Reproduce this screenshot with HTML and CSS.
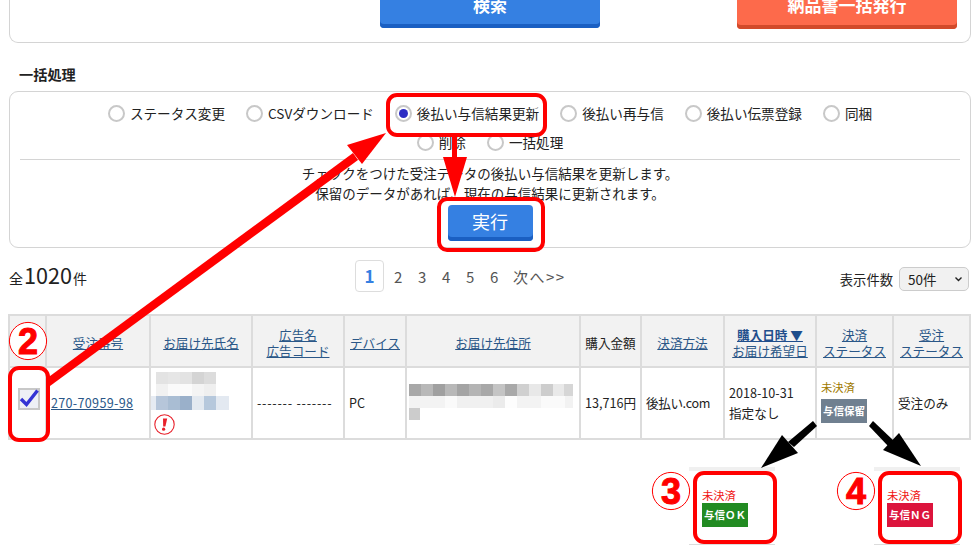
FILE: index.html
```html
<!DOCTYPE html>
<html lang="ja">
<head>
<meta charset="utf-8">
<title>一括処理</title>
<link rel="stylesheet" href="styles.css">
</head>
<body>
<div class="page">
  <section class="search-card">
    <a class="btn btn-blue btn-search">検索</a>
    <a class="btn btn-orange btn-issue">納品書一括発行</a>
  </section>

  <h2 class="section-title">一括処理</h2>
  <section class="bulk-card">
    <div class="radio-group">
      <label class="radio-item"><span class="radio"></span>ステータス変更</label>
      <label class="radio-item"><span class="radio"></span>CSVダウンロード</label>
      <label class="radio-item"><span class="radio radio-on"></span>後払い与信結果更新</label>
      <label class="radio-item"><span class="radio"></span>後払い再与信</label>
      <label class="radio-item"><span class="radio"></span>後払い伝票登録</label>
      <label class="radio-item"><span class="radio"></span>同梱</label>
      <span class="radio-break"></span>
      <label class="radio-item"><span class="radio"></span>削除</label>
      <label class="radio-item"><span class="radio"></span>一括処理</label>
    </div>
    <div class="bulk-desc">
      <p>チェックをつけた受注データの後払い与信結果を更新します。</p>
      <p>保留のデータがあれば、現在の与信結果に更新されます。</p>
    </div>
    <a class="btn btn-blue btn-run">実行</a>
  </section>

  <div class="list-bar">
    <div class="total">全<b>1020</b>件</div>
    <nav class="pager">
      <span class="page-current">1</span>
      <span class="page-num">2</span>
      <span class="page-num">3</span>
      <span class="page-num">4</span>
      <span class="page-num">5</span>
      <span class="page-num">6</span>
      <span class="page-next">次へ&gt;&gt;</span>
    </nav>
    <div class="per-page">表示件数
      <span class="select">50件
        <svg class="chevron" width="9" height="6" viewBox="0 0 9 6"><path d="M1.5 1.5 4.5 4.5 7.5 1.5" fill="none" stroke="#222" stroke-width="1.4"/></svg>
      </span>
    </div>
  </div>

  <table class="orders">
    <colgroup>
      <col class="c1"><col class="c2"><col class="c3"><col class="c4"><col class="c5"><col class="c6"><col class="c7"><col class="c8"><col class="c9"><col class="c10"><col class="c11">
    </colgroup>
    <thead>
      <tr>
        <th></th>
        <th><a>受注番号</a></th>
        <th><a>お届け先氏名</a></th>
        <th><a>広告名<br>広告コード</a></th>
        <th><a>デバイス</a></th>
        <th><a>お届け先住所</a></th>
        <th class="plain">購入金額</th>
        <th><a>決済方法</a></th>
        <th><a class="sorted">購入日時 ▼</a><br><a>お届け希望日</a></th>
        <th><a>決済<br>ステータス</a></th>
        <th><a>受注<br>ステータス</a></th>
      </tr>
    </thead>
    <tbody>
      <tr>
        <td class="cell-check"><span class="checkbox"><svg class="check-mark" width="18" height="18" viewBox="0 0 18 18"><path d="M1 9 6.5 14.5 17.5 0.5" fill="none" stroke="#3434d4" stroke-width="3.4"/></svg></span></td>
        <td class="cell-id"><a>270-70959-98</a></td>
        <td class="cell-name">
          <svg class="mosaic" width="78" height="38" viewBox="0 0 78 38">
            <g>
              <rect x="5" y="0" width="12" height="12" fill="#e3e3e3"/><rect x="17" y="0" width="12" height="12" fill="#e6e6e6"/><rect x="29" y="0" width="12" height="12" fill="#e3e3e3"/><rect x="41" y="0" width="12" height="12" fill="#d4d4d4"/><rect x="53" y="0" width="12" height="12" fill="#dcdcdc"/>
              <rect x="5" y="12" width="12" height="12" fill="#f1f1f1"/><rect x="17" y="12" width="12" height="12" fill="#fafafa"/><rect x="29" y="12" width="12" height="12" fill="#fbfbfb"/><rect x="41" y="12" width="12" height="12" fill="#f4f4f4"/><rect x="53" y="12" width="12" height="12" fill="#efefef"/>
              <rect x="0" y="24" width="5" height="14" fill="#e6ebf2"/><rect x="5" y="24" width="12" height="14" fill="#b6c6da"/><rect x="17" y="24" width="12" height="14" fill="#a9bdd3"/><rect x="29" y="24" width="12" height="14" fill="#9ab0ca"/><rect x="41" y="24" width="12" height="14" fill="#e3e9f0"/><rect x="53" y="24" width="12" height="14" fill="#b6c8dc"/><rect x="65" y="24" width="13" height="14" fill="#e3e9f1"/>
            </g>
          </svg>
          <svg class="alert" width="21" height="21" viewBox="0 0 21 21"><circle cx="10.5" cy="10.5" r="9.7" fill="#fff" stroke="#e8202a" stroke-width="1.1"/><path d="M9 4.5h4.2L11.4 12.5H9.2Z" fill="#e8202a"/><circle cx="9.6" cy="15.2" r="1.6" fill="#e8202a"/></svg>
        </td>
        <td class="cell-dashes">------- -------</td>
        <td>PC</td>
        <td class="cell-address">
          <svg class="mosaic" width="166" height="36" viewBox="0 0 166 36">
            <rect x="0" y="0" width="12" height="12" fill="#a8a8a8"/><rect x="12" y="0" width="12" height="12" fill="#b8b8b8"/><rect x="24" y="0" width="12" height="12" fill="#a0a0a0"/><rect x="36" y="0" width="12" height="12" fill="#b8b8b8"/><rect x="48" y="0" width="12" height="12" fill="#a4a4a4"/><rect x="60" y="0" width="12" height="12" fill="#b4b4b4"/><rect x="72" y="0" width="12" height="12" fill="#a8a8a8"/><rect x="84" y="0" width="12" height="12" fill="#c4c4c4"/><rect x="96" y="0" width="12" height="12" fill="#a9a9a9"/><rect x="108" y="0" width="12" height="12" fill="#d0d0d0"/><rect x="120" y="0" width="12" height="12" fill="#e8e8e8"/><rect x="132" y="0" width="12" height="12" fill="#cdcdcd"/><rect x="144" y="0" width="11" height="12" fill="#e9e9e9"/><rect x="155" y="0" width="9" height="12" fill="#d6d6d6"/>
            <rect x="0" y="12" width="36" height="12" fill="#f3f3f3"/><rect x="36" y="12" width="12" height="12" fill="#fafafa"/><rect x="48" y="12" width="36" height="12" fill="#f0f0f0"/><rect x="84" y="12" width="12" height="12" fill="#ebebeb"/><rect x="96" y="12" width="12" height="12" fill="#fdfdfd"/><rect x="108" y="12" width="24" height="12" fill="#f3f3f3"/><rect x="132" y="12" width="24" height="12" fill="#fafafa"/><rect x="156" y="12" width="8" height="12" fill="#f2f2f2"/>
            <rect x="0" y="24" width="11" height="12" fill="#cccccc"/>
          </svg>
        </td>
        <td>13,716円</td>
        <td class="cell-method">後払い.com</td>
        <td class="cell-date">2018-10-31<br>指定なし</td>
        <td class="cell-status">
          <div class="status-label">未決済</div>
          <div class="badge badge-hold">与信保留</div>
        </td>
        <td>受注のみ</td>
      </tr>
    </tbody>
  </table>
</div>

<div class="callout callout-ok">
  <div class="status-label status-red">未決済</div>
  <div class="badge badge-ok">与信ＯＫ</div>
</div>
<div class="callout callout-ng">
  <div class="status-label status-red">未決済</div>
  <div class="badge badge-ng">与信ＮＧ</div>
</div>

<svg class="annotations" width="980" height="560" viewBox="0 0 980 560">
  <g fill="none" stroke="#f00" stroke-width="4">
    <rect x="388" y="95" width="157" height="40" rx="9"/>
    <rect x="439" y="199" width="104" height="51" rx="8"/>
    <rect x="10" y="368" width="38" height="72" rx="9"/>
    <rect x="695" y="473" width="80" height="69" rx="9"/>
    <rect x="880" y="473" width="80" height="69" rx="9"/>
  </g>
  <g fill="#f00">
    <path d="M46 379 353 153 358 160 50 386Z"/>
    <path d="M386 133 347 145 362 164Z"/>
    <path d="M452 137h5v20h10l-12 40-12-40h9Z"/>
  </g>
  <g fill="#000">
    <path d="M813 421 817 426 794 447 788 442Z"/>
    <path d="M761 468 782 435 798 453Z"/>
    <path d="M873 421 869 426 888 446 894 441Z"/>
    <path d="M921 466 899 433 883 450Z"/>
  </g>
  <g class="num-circles">
    <circle cx="28" cy="341" r="18.6"/>
    <circle cx="671" cy="491" r="18.6"/>
    <circle cx="856" cy="491" r="18.6"/>
  </g>
  <g class="num-text">
    <text x="28" y="354">2</text>
    <text x="671" y="504">3</text>
    <text x="856" y="504">4</text>
  </g>
</svg>
</body>
</html>
```
FILE: styles.css
```css
* { box-sizing: border-box; }
html, body { margin: 0; padding: 0; }
body {
  width: 980px;
  height: 560px;
  overflow: hidden;
  position: relative;
  background: #fff;
  color: #222;
  font-family: "Noto Sans CJK JP", "Liberation Sans", sans-serif;
  font-size: 12.6px;
}
p { margin: 0; }
.page { padding: 0 9px; }

/* buttons */
.btn { display: block; color: #fff; text-align: center; }
.btn-blue { background: #3580e2; box-shadow: inset 0 -4px 0 #1a5fc2; }
.btn-orange { background: #fd6a4b; box-shadow: inset 0 -4px 0 #d24a2a; }

/* top search card */
.search-card {
  height: 43px;
  display: flex;
  align-items: flex-start;
  border: 1px solid #d4d4d4;
  border-top: 0;
  border-radius: 0 0 9px 9px;
}
.btn-search, .btn-issue {
  width: 220px;
  font-size: 17px;
  font-weight: 700;
  line-height: 10px;
  border-radius: 0 0 4px 4px;
}
.btn-search { height: 28px; margin-left: 370px; }
.btn-issue { height: 29px; margin-left: 137px; }

.section-title {
  margin: 21px 0 7px 10px;
  font-size: 14.2px;
  font-weight: 700;
  line-height: 20px;
  color: #222;
}

/* bulk card */
.bulk-card {
  height: 157px;
  padding: 9px 10px 0;
  border: 1px solid #d4d4d4;
  border-radius: 9px;
  font-size: 13.5px;
}
.radio-group {
  display: flex;
  flex-wrap: wrap;
  justify-content: center;
  align-content: flex-start;
  column-gap: 21px;
  height: 59px;
  border-bottom: 1px solid #d4d4d4;
  padding-top: 2px;
  font-size: 13.6px;
}
.radio-item {
  display: flex;
  align-items: center;
  gap: 5px;
  height: 20px;
  line-height: 20px;
  white-space: nowrap;
}
.radio-break { flex-basis: 100%; height: 9px; }
.radio {
  width: 17px;
  height: 17px;
  border: 2px solid #c8c8c8;
  border-radius: 50%;
  background: #fff;
  display: flex;
  align-items: center;
  justify-content: center;
}
.radio-on::after {
  content: "";
  width: 9px;
  height: 9px;
  border-radius: 50%;
  background: #2c2cc4;
}
.bulk-desc {
  text-align: center;
  line-height: 20px;
  padding-top: 3px;
}
.btn-run {
  width: 85px;
  height: 36px;
  margin: 2px auto 0;
  font-size: 18px;
  line-height: 32px;
  border-radius: 4px;
}

/* list bar */
.list-bar {
  display: grid;
  grid-template-columns: 346px auto 1fr;
  height: 33px;
  margin: 9px 0 24px;
  align-items: center;
}
.total { font-size: 14px; line-height: 33px; padding-top: 1px; }
.total b { font-size: 21.6px; font-weight: 400; margin: 0 1px; }
.pager {
  display: flex;
  align-items: center;
  font-size: 15px;
  color: #555;
}
.page-current {
  width: 29px;
  height: 32px;
  line-height: 30px;
  text-align: center;
  border: 1px solid #ddd;
  border-radius: 4px;
  color: #3580e2;
  font-size: 17px;
  font-weight: 700;
  margin-right: 10px;
}
.page-num { width: 24px; }
.page-next { margin-left: -1px; font-size: 15px; letter-spacing: 1.5px; }
.per-page {
  justify-self: end;
  display: flex;
  align-items: center;
  gap: 6px;
  font-size: 13.3px;
  margin-top: 6px;
  margin-right: 2px;
}
.select {
  display: flex;
  align-items: center;
  justify-content: space-between;
  width: 70px;
  height: 24px;
  padding: 0 5px 0 8px;
  background: #f1f1f1;
  border: 1px solid #ccc;
  border-radius: 5px;
  font-size: 13.5px;
}

/* table */
.orders {
  border-collapse: collapse;
  table-layout: fixed;
  width: 962px;
  margin-left: -1px;
  font-size: 12.6px;
  line-height: 16px;
}
.c1 { width: 37px; } .c2 { width: 104px; } .c3 { width: 102px; }
.c4 { width: 92px; } .c5 { width: 62px; } .c6 { width: 174px; }
.c7 { width: 61px; } .c8 { width: 83px; } .c9 { width: 92px; }
.c10 { width: 77px; } .c11 { width: 77px; }
.orders th, .orders td {
  border: 2px solid #dcdcdc;
  padding: 0 3px;
  white-space: nowrap;
}
.orders th {
  height: 52px;
  padding-top: 4px;
  background: #f2f2f2;
  font-weight: 400;
  text-align: center;
}
.orders td { height: 72px; padding-left: 4px; }
.orders a { color: #2a5788; text-decoration: underline; }
.orders .sorted { font-weight: 700; color: #1f4e8c; }
.plain { color: #222; }
.cell-check { padding: 0 0 8px 2px !important; text-align: center; }
.checkbox {
  display: inline-flex;
  align-items: center;
  justify-content: center;
  width: 22px;
  height: 22px;
  border: 2px solid #c8c8c8;
  background: #eef0f6;
  vertical-align: middle;
}
.check-mark { overflow: visible; }
.cell-id { padding-left: 4px !important; letter-spacing: 0.3px; }
.cell-name { padding: 0 !important; }
.mosaic { display: block; }
.alert { display: block; margin: 4px 0 0 3px; }
.cell-dashes { padding-left: 4px; letter-spacing: 0.75px; }
.cell-address { padding: 0 0 0 2px !important; }
.cell-address .mosaic { margin-bottom: 2px; }
.cell-method { letter-spacing: -0.4px; }
.cell-date { line-height: 20px; }
.cell-status { padding: 0 4px 4px !important; }

/* status */
.status-label { font-size: 11.3px; line-height: 16px; color: #a07a00; margin-bottom: 4px; }
.status-red { color: #f01414; margin-bottom: 0; }
.badge {
  width: 46px;
  height: 24px;
  line-height: 24px;
  text-align: center;
  font-size: 10.5px;
  font-weight: 700;
  color: #fff;
  white-space: nowrap;
}
.badge-hold { background: #708090; }
.badge-ok { background: #228b22; }
.badge-ng { background: #dc143c; }

/* overlays */
.callout {
  position: absolute;
  top: 467px;
  width: 86px;
  height: 78px;
  padding: 16px 0 0 13px;
  border-top: 4px solid #f0f0f0;
  border-bottom: 1px solid #dcdcdc;
}
.callout-ok { left: 689px; }
.callout-ng { left: 874px; }
.annotations { position: absolute; left: 0; top: 0; pointer-events: none; }
.num-circles circle { fill: #fff; stroke: #f00; stroke-width: 1; }
.num-text text {
  fill: #f00;
  font-family: "Liberation Sans", sans-serif;
  font-size: 36px;
  font-weight: 700;
  text-anchor: middle;
  stroke: #f00;
  stroke-width: 1;
}
```
